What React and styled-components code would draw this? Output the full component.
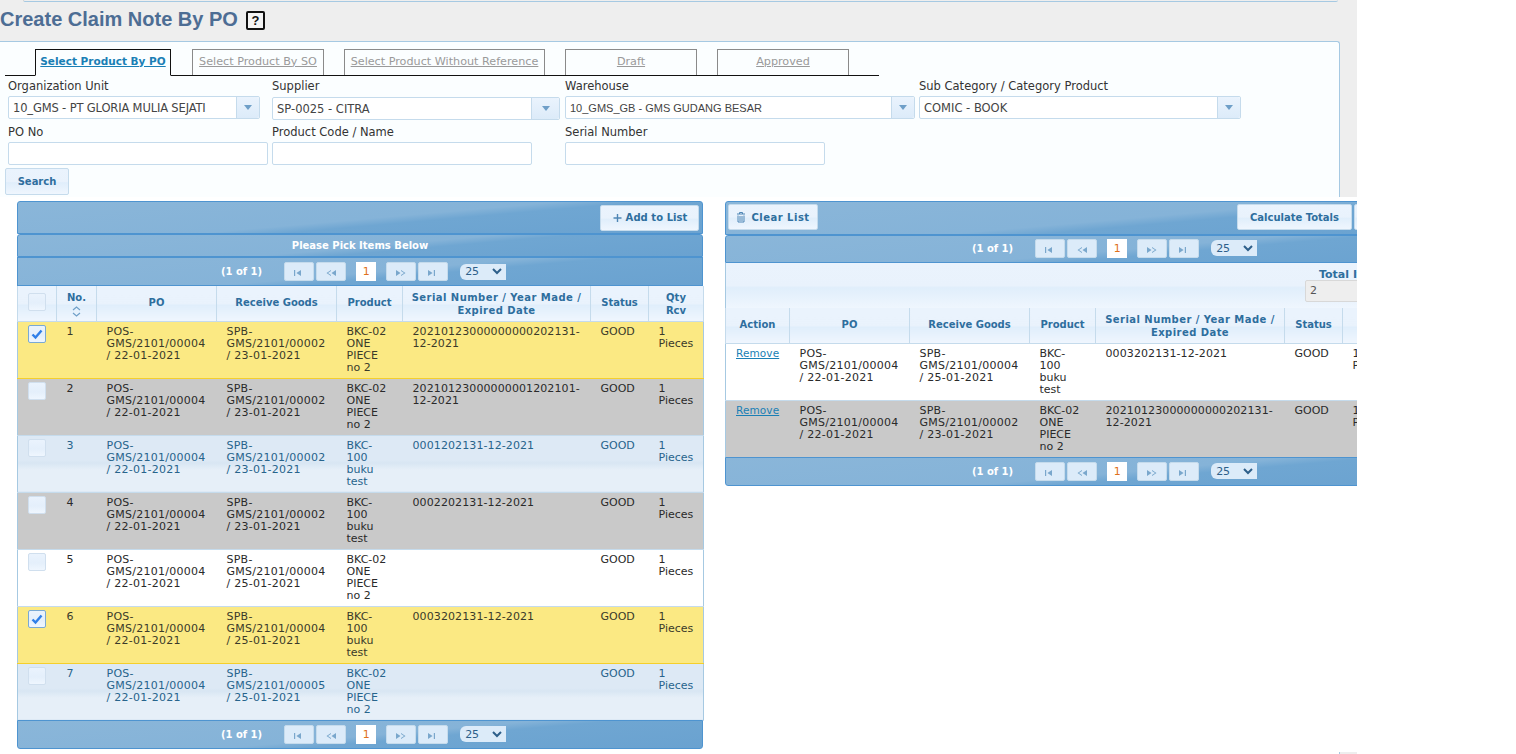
import React from 'react'
import styled, { createGlobalStyle } from 'styled-components'

const GlobalStyle = createGlobalStyle`
  html, body { margin: 0; padding: 0; background: #fff; }
  body { font-family: "DejaVu Sans", Verdana, sans-serif; font-size: 11px; color: #222; overflow: hidden; }
`

const barBg = `linear-gradient(175deg, #8ab6d9 0%, #85b3d8 52%, #6fa6d2 60%, #6aa2d0 100%)`
const headBg = `linear-gradient(180deg, #eaf3fd 0%, #e9f2fc 50%, #e0eefb 55%, #eff6fe 100%)`

const Page = styled.div`
  width: 1357px;
  height: 754px;
  overflow: hidden;
`
const Top = styled.div`
  background: #eeeeee;
  height: 197px;
  overflow: hidden;
`
const TopBox = styled.div`
  height: 1px;
  margin: 0 19px 0 23px;
  border-bottom: 1px solid #a6c9e2;
  border-left: 1px solid #d0d0d0;
  border-radius: 0 0 3px 3px;
`
const Title = styled.h1`
  margin: 0;
  height: 39px;
  padding-top: 4px;
  box-sizing: border-box;
  display: flex;
  align-items: flex-start;
  gap: 8px;
  font: bold 20px/26px "Liberation Sans", Arial, sans-serif;
  color: #4d6d94;
`
const HelpIcon = styled.span`
  width: 19px;
  height: 19px;
  margin-top: 5px;
  box-sizing: border-box;
  border: 2px solid #111;
  border-radius: 2px;
  background: #f4f4f4;
  color: #111;
  font: bold 13px/15px "Liberation Sans", Arial, sans-serif;
  text-align: center;
`
const Panel = styled.div`
  width: 1340px;
  height: 157px;
  box-sizing: border-box;
  background: #fbfeff;
  border: 1px solid #a6c9e2;
  border-left: 0;
  border-bottom: 0;
  border-radius: 0 3px 0 0;
  padding: 6px 0 0 5px;
`
const Tabs = styled.div`
  width: 874px;
  height: 28px;
  box-sizing: border-box;
  display: flex;
  border-bottom: 1px solid #111;
  align-items: flex-end;
`
const Tab = styled.a`
  box-sizing: border-box;
  height: ${p => (p.$active ? 27 : 26)}px;
  width: ${p => p.$w}px;
  margin-left: ${p => p.$ml}px;
  margin-bottom: ${p => (p.$active ? -1 : 0)}px;
  padding-bottom: ${p => (p.$active ? 4 : 3)}px;
  display: flex;
  align-items: center;
  justify-content: center;
  border: 1px solid ${p => (p.$active ? '#111' : '#8a8a8a')};
  border-bottom: ${p => (p.$active ? '1px solid #fbfeff' : '0')};
  color: ${p => (p.$active ? '#1a7fb5' : '#9a9a9a')};
  font-weight: ${p => (p.$active ? 'bold' : 'normal')};
  font-size: ${p => (p.$active ? 10.5 : 11.2)}px;
  text-decoration: underline;
  white-space: nowrap;
`
const FormGrid = styled.div`
  display: flex;
  flex-direction: column;
  margin-left: 3px;
`
const FormRow = styled.div`
  display: flex;
  height: 46px;
`
const Field = styled.div`
  width: ${p => p.$w}px;
  padding-top: 2px;
  box-sizing: border-box;
`
const Label = styled.div`
  height: 18px;
  padding-top: 1px;
  box-sizing: border-box;
  line-height: 14px;
  color: #333;
  font-size: 11.5px;
`
const Combo = styled.div`
  width: ${p => p.$w}px;
  height: 23px;
  margin-top: ${p => p.$drop || 0}px;
  box-sizing: border-box;
  display: flex;
  background: #fff;
  border: 1px solid #c5dbec;
  border-radius: 2px;
`
const ComboText = styled.div`
  flex: 1;
  padding-left: 4px;
  line-height: 22px;
  color: #444;
  font-family: ${p => (p.$narrow ? '"Liberation Sans", Arial, sans-serif' : 'inherit')};
  font-size: ${p => (p.$narrow ? 11 : 11.5)}px;
  letter-spacing: ${p => p.$ls || 0}px;
  white-space: nowrap;
  overflow: hidden;
`
const ComboArrow = styled.div`
  width: ${p => p.$w || 22}px;
  display: flex;
  align-items: center;
  justify-content: center;
  border-left: 1px solid #c5dbec;
  border-radius: 0 2px 2px 0;
  background: linear-gradient(180deg, #eaf3fd 0%, #dcebf9 100%);
  &::after {
    content: '';
    border-left: 4px solid transparent;
    border-right: 4px solid transparent;
    border-top: 5px solid #6f9fc8;
  }
`
const TextInput = styled.div`
  width: ${p => p.$w}px;
  height: 23px;
  box-sizing: border-box;
  background: #fff;
  border: 1px solid #c5dbec;
  border-radius: 2px;
`
const Button = styled.button`
  height: 26px;
  width: ${p => (p.$w ? `${p.$w}px` : 'auto')};
  padding: 0 ${p => p.$px || 12}px;
  display: inline-flex;
  align-items: center;
  justify-content: center;
  gap: ${p => p.$gap || 5}px;
  box-sizing: border-box;
  border: 1px solid #c5dbec;
  border-radius: 2px;
  background: ${headBg};
  color: #2e6e9e;
  font: bold 10px "DejaVu Sans", Verdana, sans-serif;
  letter-spacing: ${p => p.$ls || 0}px;
  white-space: nowrap;
  flex-shrink: 0;
`
const SearchButton = styled(Button)`
  height: 27px;
  width: 64px;
  padding: 0;
`
const Tables = styled.div`
  height: 555px;
  box-sizing: border-box;
  display: flex;
  align-items: flex-start;
  padding: 4px 0 0 17px;
`
const LeftCol = styled.div`
  width: 686px;
  flex-shrink: 0;
`
const RightCol = styled.div`
  width: 772px;
  flex-shrink: 0;
  margin-left: 22px;
`
const Bar = styled.div`
  height: ${p => p.$h}px;
  box-sizing: border-box;
  display: flex;
  align-items: center;
  justify-content: ${p => p.$justify || 'center'};
  gap: ${p => p.$gap || 0}px;
  padding: ${p => p.$pad || '0'};
  background: ${barBg};
  border: 1px solid #4e94d0;
  border-radius: ${p => p.$radius || '0'};
  color: #fff;
  font-weight: bold;
  font-size: 10px;
`
const FootBar = styled(Bar)`
  margin-top: -1px;
  position: relative;
`
const Spacer = styled.div`
  flex: 1;
`
const Pager = styled.div`
  display: flex;
  align-items: center;
  padding-left: 7px;
`
const PageInfo = styled.span`
  margin-right: 20px;
  color: #fff;
  font-weight: bold;
`
const PageBtn = styled.span`
  width: 30px;
  height: 19px;
  margin-left: 2px;
  box-sizing: border-box;
  display: flex;
  align-items: center;
  justify-content: center;
  padding-top: 3px;
  background: #dcebf9;
  border: 1px solid #c5dbec;
  border-radius: 2px;
`
const PageNum = styled.span`
  width: 20px;
  height: 19px;
  margin: 0 8px 0 10px;
  box-sizing: border-box;
  text-align: center;
  line-height: 19px;
  background: #fff;
  color: #e0701c;
  font-size: 11px;
  font-weight: normal;
`
const PerPage = styled.span`
  width: 46px;
  height: 16px;
  margin-left: 12px;
  box-sizing: border-box;
  display: flex;
  align-items: center;
  justify-content: space-between;
  padding: 0 4px 0 5px;
  background: #dcebf9;
  border-radius: 6px 0 0 6px;
  color: #2e5f8a;
  font-size: 11px;
  font-weight: normal;
`
const Table = styled.table`
  width: ${p => p.$w}px;
  table-layout: fixed;
  border-collapse: collapse;
  border-left: 1px solid #a6c9e2;
  border-right: 1px solid #a6c9e2;
`
const Th = styled.th`
  width: ${p => p.$w}px;
  height: 35px;
  padding: ${p => (p.$tall ? '1px 4px 0' : '0 4px 2px')};
  box-sizing: border-box;
  background: ${headBg};
  border: 1px solid #c5dbec;
  border-top: 0;
  color: #2e6e9e;
  font-size: 10px;
  line-height: 13px;
  font-weight: bold;
  text-align: center;
  letter-spacing: ${p => p.$ls || 0}px;
`
const rowBg = {
  selected: '#fbe983',
  grey: '#c9c9c9',
  blue: 'linear-gradient(180deg, #dde9f5 0%, #dde9f5 45%, #d8e6f3 50%, #e6eff8 62%, #e6eff8 100%)',
  plain: '#fff',
}
const rowFg = { selected: '#3a3a2a', grey: '#2a2a2a', blue: '#27648c', plain: '#2a2a2a' }
const Tr = styled.tr`
  background: ${p => rowBg[p.$kind]};
  color: ${p => rowFg[p.$kind]};
  border-bottom: 1px solid ${p => (p.$kind === 'selected' ? '#f5cf2b' : '#c5dbec')};
`
const Td = styled.td`
  height: 57px;
  padding: 4px ${p => p.$pr || 5}px 0 10px;
  box-sizing: border-box;
  vertical-align: top;
  line-height: 12px;
  font-size: 11px;
  letter-spacing: ${p => p.$ls || 0}px;
  overflow-wrap: break-word;
`
const Check = styled.span`
  display: block;
  width: 18px;
  height: 18px;
  margin: -1px auto 0;
  box-sizing: border-box;
  border: 1px solid ${p => (p.$on ? '#79a9d4' : '#d0dfee')};
  border-radius: 2px;
  background: linear-gradient(180deg, #eaf3fd 0%, #e4effb 55%, #eff6fe 100%);
`
const SortIcon = styled.svg`
  display: block;
  margin: 2px auto 0;
`
const RemoveLink = styled.a`
  display: block;
  color: #1a7fb5;
  font-size: 10.5px;
  line-height: 11px;
  letter-spacing: .1px;
  text-decoration: underline;
  white-space: nowrap;
`
const TotalsRow = styled.div`
  height: 45px;
  box-sizing: border-box;
  padding-top: 5px;
  background: ${headBg};
  border-left: 1px solid #a6c9e2;
  display: flex;
  justify-content: flex-end;
`
const TotalsBox = styled.div`
  width: 192px;
  white-space: nowrap;
  color: #2e6e9e;
  font-size: 11px;
  font-weight: bold;
`
const TotalsLabel = styled.div`
  height: 12px;
  line-height: 13px;
  padding-left: 14px;
`
const TotalsInput = styled.div`
  width: 100px;
  height: 22px;
  box-sizing: border-box;
  background: #eeeeee;
  border: 1px solid #d8d8d8;
  border-radius: 2px;
  padding-left: 4px;
  color: #555;
  font-size: 11px;
  font-weight: normal;
  line-height: 20px;
`
const FootStrip = styled.div`
  height: 2px;
  margin-left: 1339px;
  background: #eeeeee;
  border-left: 1px solid #a6c9e2;
`

const pagerIcons = {
  first: 'M1 1v6h1.2V1zM8 1L3.4 4 8 7z',
  prev: 'M6 1L1.5 4 6 7V6L3 4l3-2zM11 1L6.5 4 11 7z',
  next: 'M1 1l4.5 3L1 7zM6 1l4.5 3L6 7V6l3-2-3-2z',
  last: 'M1 1l4.6 3L1 7zM6.8 1v6H8V1z',
}
const PagerIcon = ({ name }) => (
  <svg width="12" height="8" viewBox="0 0 12 8"><path d={pagerIcons[name]} fill="#7aa7cc" /></svg>
)

const PagerBar = () => (
  <Pager>
    <PageInfo>(1 of 1)</PageInfo>
    <PageBtn><PagerIcon name="first" /></PageBtn>
    <PageBtn><PagerIcon name="prev" /></PageBtn>
    <PageNum>1</PageNum>
    <PageBtn><PagerIcon name="next" /></PageBtn>
    <PageBtn><PagerIcon name="last" /></PageBtn>
    <PerPage>
      25
      <svg width="10" height="7" viewBox="0 0 10 7"><path d="M1 1l4 4 4-4" fill="none" stroke="#2e5f8a" strokeWidth="2" /></svg>
    </PerPage>
  </Pager>
)

const leftRows = [
  { no: 1, kind: 'selected', on: true, rg: 'SPB-GMS/2101/00002 / 23-01-2021', pr: 'BKC-02 ONE PIECE no 2', sn: '20210123000000000202131-12-2021' },
  { no: 2, kind: 'grey', rg: 'SPB-GMS/2101/00002 / 23-01-2021', pr: 'BKC-02 ONE PIECE no 2', sn: '20210123000000001202101-12-2021' },
  { no: 3, kind: 'blue', rg: 'SPB-GMS/2101/00002 / 23-01-2021', pr: 'BKC-100 buku test', sn: '0001202131-12-2021' },
  { no: 4, kind: 'grey', rg: 'SPB-GMS/2101/00002 / 23-01-2021', pr: 'BKC-100 buku test', sn: '0002202131-12-2021' },
  { no: 5, kind: 'plain', rg: 'SPB-GMS/2101/00004 / 25-01-2021', pr: 'BKC-02 ONE PIECE no 2', sn: '' },
  { no: 6, kind: 'selected', on: true, rg: 'SPB-GMS/2101/00004 / 25-01-2021', pr: 'BKC-100 buku test', sn: '0003202131-12-2021' },
  { no: 7, kind: 'blue', rg: 'SPB-GMS/2101/00005 / 25-01-2021', pr: 'BKC-02 ONE PIECE no 2', sn: '' },
]

const rightRows = [
  { kind: 'plain', rg: 'SPB-GMS/2101/00004 / 25-01-2021', pr: 'BKC-100 buku test', sn: '0003202131-12-2021' },
  { kind: 'grey', rg: 'SPB-GMS/2101/00002 / 23-01-2021', pr: 'BKC-02 ONE PIECE no 2', sn: '20210123000000000202131-12-2021' },
]

export default function App() {
  return (
    <Page>
      <GlobalStyle />
      <Top>
        <TopBox />
        <Title>
          Create Claim Note By PO
          <HelpIcon>?</HelpIcon>
        </Title>
        <Panel>
          <Tabs>
            <Tab $active $w={136} $ml={30}>Select Product By PO</Tab>
            <Tab $w={132} $ml={21}>Select Product By SO</Tab>
            <Tab $w={201} $ml={20}>Select Product Without Reference</Tab>
            <Tab $w={132} $ml={20}>Draft</Tab>
            <Tab $w={132} $ml={20}>Approved</Tab>
          </Tabs>
          <FormGrid>
            <FormRow>
              <Field $w={264}>
                <Label>Organization Unit</Label>
                <Combo $w={252}><ComboText $ls={-0.15}>10_GMS - PT GLORIA MULIA SEJATI</ComboText><ComboArrow /></Combo>
              </Field>
              <Field $w={293}>
                <Label>Supplier</Label>
                <Combo $w={288} $drop={1}><ComboText>SP-0025 - CITRA</ComboText><ComboArrow $w={27} /></Combo>
              </Field>
              <Field $w={354}>
                <Label>Warehouse</Label>
                <Combo $w={350}><ComboText $narrow>10_GMS_GB - GMS GUDANG BESAR</ComboText><ComboArrow /></Combo>
              </Field>
              <Field $w={322}>
                <Label>Sub Category / Category Product</Label>
                <Combo $w={322}><ComboText>COMIC - BOOK</ComboText><ComboArrow /></Combo>
              </Field>
            </FormRow>
            <FormRow>
              <Field $w={264}>
                <Label>PO No</Label>
                <TextInput $w={260} />
              </Field>
              <Field $w={293}>
                <Label>Product Code / Name</Label>
                <TextInput $w={260} />
              </Field>
              <Field $w={354}>
                <Label>Serial Number</Label>
                <TextInput $w={260} />
              </Field>
            </FormRow>
          </FormGrid>
          <SearchButton>Search</SearchButton>
        </Panel>
      </Top>
      <Tables>
        <LeftCol>
          <Bar $h={33} $justify="flex-end" $pad="0 3px 0 0" $radius="3px 3px 0 0">
            <Button $w={99} $px={6} $gap={3} $ls={0.05}>
              <svg width="11" height="11" viewBox="0 0 11 11"><path d="M5.5 2v8M1.5 6h8" fill="none" stroke="#4f86b5" strokeWidth="1.4" /></svg>
              Add to List
            </Button>
          </Bar>
          <Bar $h={23} $radius="3px 3px 0 0">Please Pick Items Below</Bar>
          <Bar $h={29}><PagerBar /></Bar>
          <Table $w={686}>
            <thead>
              <tr>
                <Th $w={39}><Check /></Th>
                <Th $w={40} $tall>
                  No.
                  <SortIcon width="9" height="11" viewBox="0 0 9 11"><path d="M1 4l3.5-3L8 4M1 7l3.5 3L8 7" fill="none" stroke="#6f9fc8" strokeWidth="1.2" /></SortIcon>
                </Th>
                <Th $w={120}>PO</Th>
                <Th $w={120}>Receive Goods</Th>
                <Th $w={66}>Product</Th>
                <Th $w={188} $ls={0.45} $tall>Serial Number / Year Made / Expired Date</Th>
                <Th $w={58}>Status</Th>
                <Th $w={55} $tall>Qty<br />Rcv</Th>
              </tr>
            </thead>
            <tbody>
              {leftRows.map(r => (
                <Tr key={r.no} $kind={r.kind}>
                  <Td $pr={10}><Check $on={r.on}>{r.on && <svg width="16" height="16" viewBox="0 0 16 16"><path d="M3.5 8.5l3 3 6-7" fill="none" stroke="#2f7fe8" strokeWidth="2.4" /></svg>}</Check></Td>
                  <Td>{r.no}</Td>
                  <Td $ls={0.25}>POS-GMS/2101/00004 / 22-01-2021</Td>
                  <Td $ls={0.25}>{r.rg}</Td>
                  <Td $pr={12}>{r.pr}</Td>
                  <Td $ls={0.1}>{r.sn}</Td>
                  <Td>GOOD</Td>
                  <Td>1 Pieces</Td>
                </Tr>
              ))}
            </tbody>
          </Table>
          <FootBar $h={29} $radius="0 0 3px 3px"><PagerBar /></FootBar>
        </LeftCol>
        <RightCol>
          <Bar $h={34} $pad="0 2px 2px 2px" $gap={2} $radius="3px 0 0 0">
            <Button $w={90} $px={4} $gap={5} $ls={0.5}>
              <svg width="10" height="12" viewBox="0 0 10 12"><path d="M1 3h8M3.5 3V1.5h3V3M2 4.5V11h6V4.5M4 5v5M6 5v5" fill="none" stroke="#4f86b5" strokeWidth="1" /></svg>
              Clear List
            </Button>
            <Spacer />
            <Button>Calculate Totals</Button>
            <Button $w={140} />
          </Bar>
          <Bar $h={28} $pad="0 0 2px" $radius="3px 0 0 0"><PagerBar /></Bar>
          <TotalsRow>
            <TotalsBox>
              <TotalsLabel>Total Items</TotalsLabel>
              <TotalsInput>2</TotalsInput>
            </TotalsBox>
          </TotalsRow>
          <Table $w={772}>
            <thead>
              <tr>
                <Th $w={64}>Action</Th>
                <Th $w={120}>PO</Th>
                <Th $w={120}>Receive Goods</Th>
                <Th $w={66}>Product</Th>
                <Th $w={189} $ls={0.45} $tall>Serial Number / Year Made / Expired Date</Th>
                <Th $w={58}>Status</Th>
                <Th $w={155} />
              </tr>
            </thead>
            <tbody>
              {rightRows.map(r => (
                <Tr key={r.rg} $kind={r.kind}>
                  <Td><RemoveLink>Remove</RemoveLink></Td>
                  <Td $ls={0.25}>POS-GMS/2101/00004 / 22-01-2021</Td>
                  <Td $ls={0.25}>{r.rg}</Td>
                  <Td $pr={12}>{r.pr}</Td>
                  <Td $ls={0.1}>{r.sn}</Td>
                  <Td>GOOD</Td>
                  <Td>1<br />Pieces</Td>
                </Tr>
              ))}
            </tbody>
          </Table>
          <FootBar $h={29} $radius="0 0 0 3px"><PagerBar /></FootBar>
        </RightCol>
      </Tables>
      <FootStrip />
    </Page>
  )
}
